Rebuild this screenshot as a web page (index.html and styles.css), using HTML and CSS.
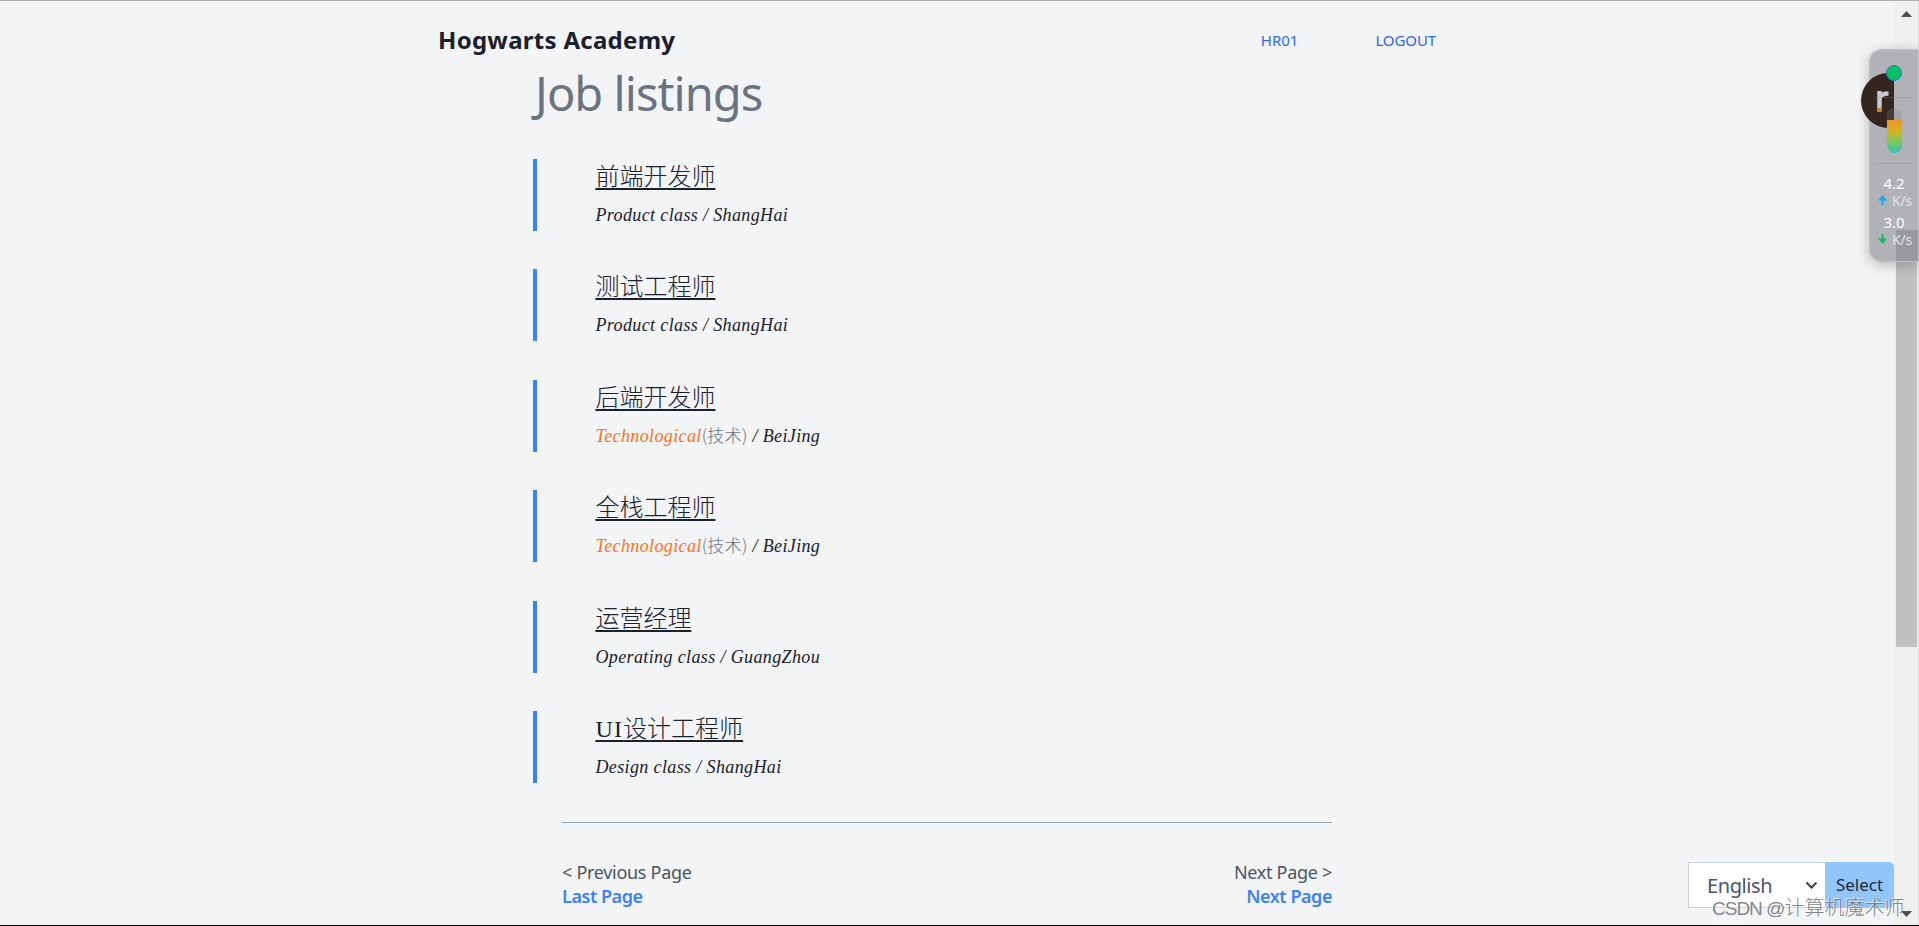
FILE: index.html
```html
<!DOCTYPE html>
<html lang="en">
<head>
  <meta charset="UTF-8">
  <title>Job listings</title>
  <link rel="stylesheet" href="styles.css">
</head>
<body>

  <nav class="navbar">
    <a class="brand" href="#">Hogwarts Academy</a>
    <div class="nav-links">
      <a class="user" href="#">HR01</a>
      <a class="logout" href="#">LOGOUT</a>
    </div>
  </nav>

  <main class="content">
    <h1>Job listings</h1>

    <ul class="jobs">
      <li class="job">
        <a class="job-name" href="#">前端开发师</a>
        <p class="job-info">Product class / ShangHai</p>
      </li>
      <li class="job">
        <a class="job-name" href="#">测试工程师</a>
        <p class="job-info">Product class / ShangHai</p>
      </li>
      <li class="job">
        <a class="job-name" href="#">后端开发师</a>
        <p class="job-info"><span class="tech">Technological</span><span class="zh">(技术)</span> / BeiJing</p>
      </li>
      <li class="job">
        <a class="job-name" href="#">全栈工程师</a>
        <p class="job-info"><span class="tech">Technological</span><span class="zh">(技术)</span> / BeiJing</p>
      </li>
      <li class="job">
        <a class="job-name" href="#">运营经理</a>
        <p class="job-info">Operating class / GuangZhou</p>
      </li>
      <li class="job">
        <a class="job-name" href="#"><span class="latin">UI</span>设计工程师</a>
        <p class="job-info">Design class / ShangHai</p>
      </li>
    </ul>

    <div class="pager">
      <div class="pager-side">
        <span class="pager-text">&lt; Previous Page</span>
        <a class="pager-link" href="#">Last Page</a>
      </div>
      <div class="pager-side right">
        <span class="pager-text">Next Page &gt;</span>
        <a class="pager-link" href="#">Next Page</a>
      </div>
    </div>
  </main>

  <form class="language">
    <div class="language-select">
      <span>English</span>
      <svg width="13" height="9" viewBox="0 0 13 9"><path d="M1.5 1.5 6.5 6.5 11.5 1.5" fill="none" stroke="#374151" stroke-width="2"/></svg>
    </div>
    <button class="language-btn" type="button">Select</button>
  </form>

  <div class="scrollbar">
    <svg class="arrow" width="11" height="6" viewBox="0 0 11 6"><path d="M0 6 5.5 0 11 6z" fill="#505050"/></svg>
    <div class="thumb"></div>
    <svg class="arrow down" width="11" height="6" viewBox="0 0 11 6"><path d="M0 0 5.5 6 11 0z" fill="#505050"/></svg>
  </div>

  <!-- network speed widget docked to the right edge -->
  <div class="monitor">
    <svg class="gauge" width="60" height="172" viewBox="0 0 60 172">
      <defs>
        <linearGradient id="level" x1="0" y1="0" x2="0" y2="1">
          <stop offset="0" stop-color="#ef932c"/>
          <stop offset="0.35" stop-color="#d5b51c"/>
          <stop offset="0.7" stop-color="#6fc963"/>
          <stop offset="1" stop-color="#32bfc2"/>
        </linearGradient>
        <clipPath id="edge"><path d="M0 0h34v172H0z"/></clipPath>
      </defs>
      <circle cx="28.500" cy="51.500" r="27.500" fill="#33251f" clip-path="url(#edge)"/>
      <path d="M19.500 62V42M19.500 50Q20 44.500 28.500 44.500" fill="none" stroke="#cacace" stroke-width="4.500"/>
      <path d="M17.200 59h4.500v4h-4.500z" fill="#c98012"/>
      <path d="M15 48.500h40M15 114.500h40" stroke="#808085" stroke-opacity="0.3" stroke-width="1"/>
      <path d="M27 71v-4a7.500 7.500 0 0 1 15 0v4z" fill="#a5a4a7"/>
      <path d="M27 71v-4a7.500 7.500 0 0 1 7-7.500V71z" fill="#453b39"/>
      <path d="M27 71h15v25.500a7.500 7.500 0 0 1-15 0z" fill="url(#level)"/>
      <circle cx="34" cy="24" r="7.500" fill="#00c064" stroke="#347bc4"/>
    </svg>
    <div class="speed">4.2</div>
    <div class="unit"><svg width="9" height="10" viewBox="0 0 9 10"><path d="M4.500 0 9 5.500H5.500V10h-2V5.500H0z" fill="#16a9fa"/></svg>K/s</div>
    <div class="speed">3.0</div>
    <div class="unit"><svg width="9" height="10" viewBox="0 0 9 10"><path d="M4.500 10 9 4.500H5.500V0h-2v4.500H0z" fill="#10b968"/></svg>K/s</div>
  </div>

  <div class="watermark"><span>CSDN @</span>计算机魔术师</div>

</body>
</html>
```
FILE: styles.css
```css
* {
  box-sizing: border-box;
}

body {
  margin: 0;
  position: relative;
  width: 1919px;
  height: 926px;
  overflow: hidden;
  background: #f3f4f6;
  border-top: 1px solid #adaeb1;
  border-bottom: 1px solid #000;
  font-family: "Noto Sans", "Noto Sans CJK SC", sans-serif;
  color: #1a202c;
}

a {
  color: inherit;
  text-decoration: none;
}

h1, p, ul {
  margin: 0;
  padding: 0;
}

.navbar {
  display: flex;
  justify-content: space-between;
  align-items: center;
  width: 998px;
  height: 60px;
  margin-left: 438px;
  padding-top: 18px;
}

.brand {
  margin-top: -2px;
  font-size: 24px;
  font-weight: 700;
  letter-spacing: 0.28px;
}

.nav-links {
  display: flex;
  gap: 77px;
  font-size: 15px;
  color: #2f68e8;
}

.logout {
  letter-spacing: -0.1px;
}

.content {
  width: 800px;
  margin-left: 533px;
}

h1 {
  height: 98px;
  padding-left: 2px;
  font-size: 47px;
  line-height: 64px;
  font-weight: 400;
  letter-spacing: -0.95px;
  color: #6b7280;
}

.jobs {
  list-style: none;
}

.job {
  height: 72px;
  margin-bottom: 38.45px;
  padding-left: 58px;
  border-left: 4px solid #3b82f6;
}

.job-name {
  display: block;
  width: fit-content;
  height: 36px;
  padding-left: 0.4px;
  font-family: "Liberation Serif", "Noto Sans CJK SC", serif;
  font-size: 24px;
  line-height: 36px;
  font-weight: 300;
  text-decoration: underline;
  text-decoration-thickness: 2px;
  text-underline-offset: 3px;
}

.latin {
  letter-spacing: 1.2px;
}

.job-info {
  padding-left: 0.5px;
  font-family: "Liberation Serif", "Noto Sans CJK SC", serif;
  font-size: 18px;
  line-height: 40px;
  font-style: italic;
  letter-spacing: 0.37px;
  white-space: nowrap;
}

.tech {
  color: #f97316;
}

.zh {
  font-family: "Noto Sans CJK SC", sans-serif;
  font-style: normal;
  font-weight: 300;
  font-size: 17px;
  line-height: 1;
  letter-spacing: 0.3px;
  color: #6b7280;
}

.pager {
  display: flex;
  justify-content: space-between;
  width: 770px;
  margin-left: 29px;
  padding-top: 37px;
  border-top: 1px solid #94a3b3;
}

.pager-side {
  display: flex;
  flex-direction: column;
  font-size: 18px;
  line-height: 24px;
  letter-spacing: -0.3px;
}

.right {
  align-items: flex-end;
}

.pager-text {
  color: #4b5563;
}

.pager-link {
  font-weight: 600;
  color: #3b82f6;
  letter-spacing: -0.45px;
}

.language {
  position: absolute;
  left: 1688px;
  top: 861px;
  display: flex;
  height: 46px;
}

.language-select {
  display: flex;
  justify-content: space-between;
  align-items: center;
  width: 137px;
  padding: 0 7px 0 18px;
  background: #fff;
  border: 1px solid #cbd5e0;
  border-right: none;
  font-size: 20px;
  letter-spacing: -0.4px;
  color: #4b5563;
}

.language-btn {
  width: 69px;
  padding: 0 0 2px;
  border: none;
  border-radius: 0 5px 5px 0;
  background: #93c5fd;
  font-family: inherit;
  font-size: 17px;
  color: #1f2937;
}

.scrollbar {
  position: absolute;
  top: 0;
  right: 0;
  width: 25px;
  height: 924px;
  padding: 10px 2px 0;
  background: #f0f0f0;
  border-right: 1px solid #dcdcdc;
}

.arrow {
  display: block;
  margin-left: 5px;
}

.thumb {
  width: 21px;
  height: 418px;
  margin-top: 212px;
  background: #c1c1c1;
}

.down {
  margin-top: 264px;
}

.monitor {
  position: absolute;
  left: 1869px;
  top: 48px;
  width: 49px;
  height: 213px;
  padding-top: 124px;
  border-radius: 13px 0 0 13px;
  border: 1px solid #bfc0c4;
  border-right: none;
  background: linear-gradient(#98999d, #98999d) 26px 180px / 22px 32px no-repeat, #b1b2b6;
  box-shadow: 0 3px 14px rgba(0, 0, 0, 0.25);
  color: #fff;
}

.gauge {
  position: absolute;
  left: -10px;
  top: -1px;
}

.speed {
  height: 22px;
  font-size: 15px;
  line-height: 19px;
  text-align: center;
}

.unit {
  display: flex;
  align-items: center;
  gap: 5px;
  height: 22px;
  padding-left: 8px;
  margin: -7px 0 2px;
  font-size: 14px;
  letter-spacing: -0.2px;
  color: #e4e4e6;
}

.watermark {
  position: absolute;
  left: 1712px;
  top: 893px;
  font-family: "Liberation Sans", "Noto Sans CJK SC", sans-serif;
  font-size: 20px;
  line-height: 28px;
  font-weight: 300;
  color: rgba(115, 117, 122, 0.9);
  text-shadow: -1px -1px 0 rgba(255, 255, 255, 0.7);
  white-space: nowrap;
}

.watermark span {
  font-size: 19px;
  letter-spacing: -1px;
}
```
